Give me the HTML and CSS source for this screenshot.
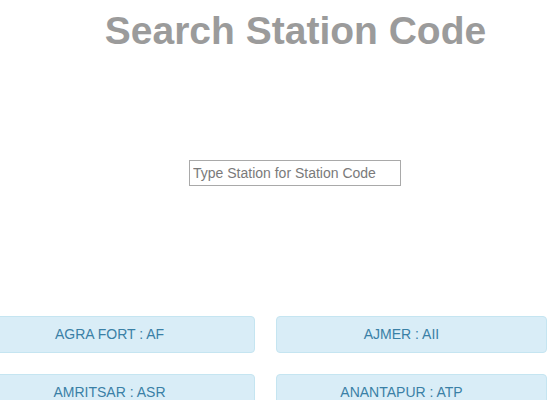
FILE: index.html
```html
<!DOCTYPE html>
<html>
<head>
<meta charset="utf-8">
<link rel="stylesheet" href="styles.css">
</head>
<body>
<div class="page">
  <header class="head">
    <h1 class="title">Search Station Code</h1>
  </header>
  <div class="search">
    <input class="search-input" type="text" placeholder="Type Station for Station Code">
  </div>
  <div class="stations">
    <div class="station">AGRA FORT : AF</div>
    <div class="station">AJMER : AII</div>
    <div class="station">AMRITSAR : ASR</div>
    <div class="station">ANANTAPUR : ATP</div>
  </div>
</div>
</body>
</html>
```
FILE: styles.css
```css
html, body {
  margin: 0;
  padding: 0;
  background: #ffffff;
  overflow: hidden;
}
body {
  font-family: "Liberation Sans", Arial, Helvetica, sans-serif;
  width: 558px;
  height: 400px;
}
.page {
  display: flex;
  flex-direction: column;
}
.head {
  padding: 9px 0 0 33px;
  text-align: center;
}
.title {
  margin: 0;
  font-size: 39px;
  line-height: 44px;
  font-weight: bold;
  color: #9b9b9b;
}
.search {
  margin-top: 107px;
  padding-left: 32px;
  display: flex;
  justify-content: center;
}
.search-input {
  box-sizing: border-box;
  width: 212px;
  height: 26px;
  margin: 0;
  padding: 0 3px;
  border: 1px solid #a9a9a9;
  border-radius: 0;
  font-family: "Liberation Sans", Arial, sans-serif;
  font-size: 14px;
  color: #333;
  outline: none;
}
.search-input::placeholder {
  color: #7a7a7a;
}
.stations {
  margin-top: 130px;
  margin-left: -16px;
  width: 563px;
  display: grid;
  grid-template-columns: 271px 271px;
  column-gap: 21px;
  row-gap: 21px;
}
.station {
  box-sizing: border-box;
  height: 37px;
  padding: 7px 35px 8px 15px;
  background: #d9edf7;
  border: 1px solid #c5e5f1;
  border-radius: 4px;
  color: #3a80a6;
  font-size: 14px;
  line-height: 20px;
  text-align: center;
}
```
